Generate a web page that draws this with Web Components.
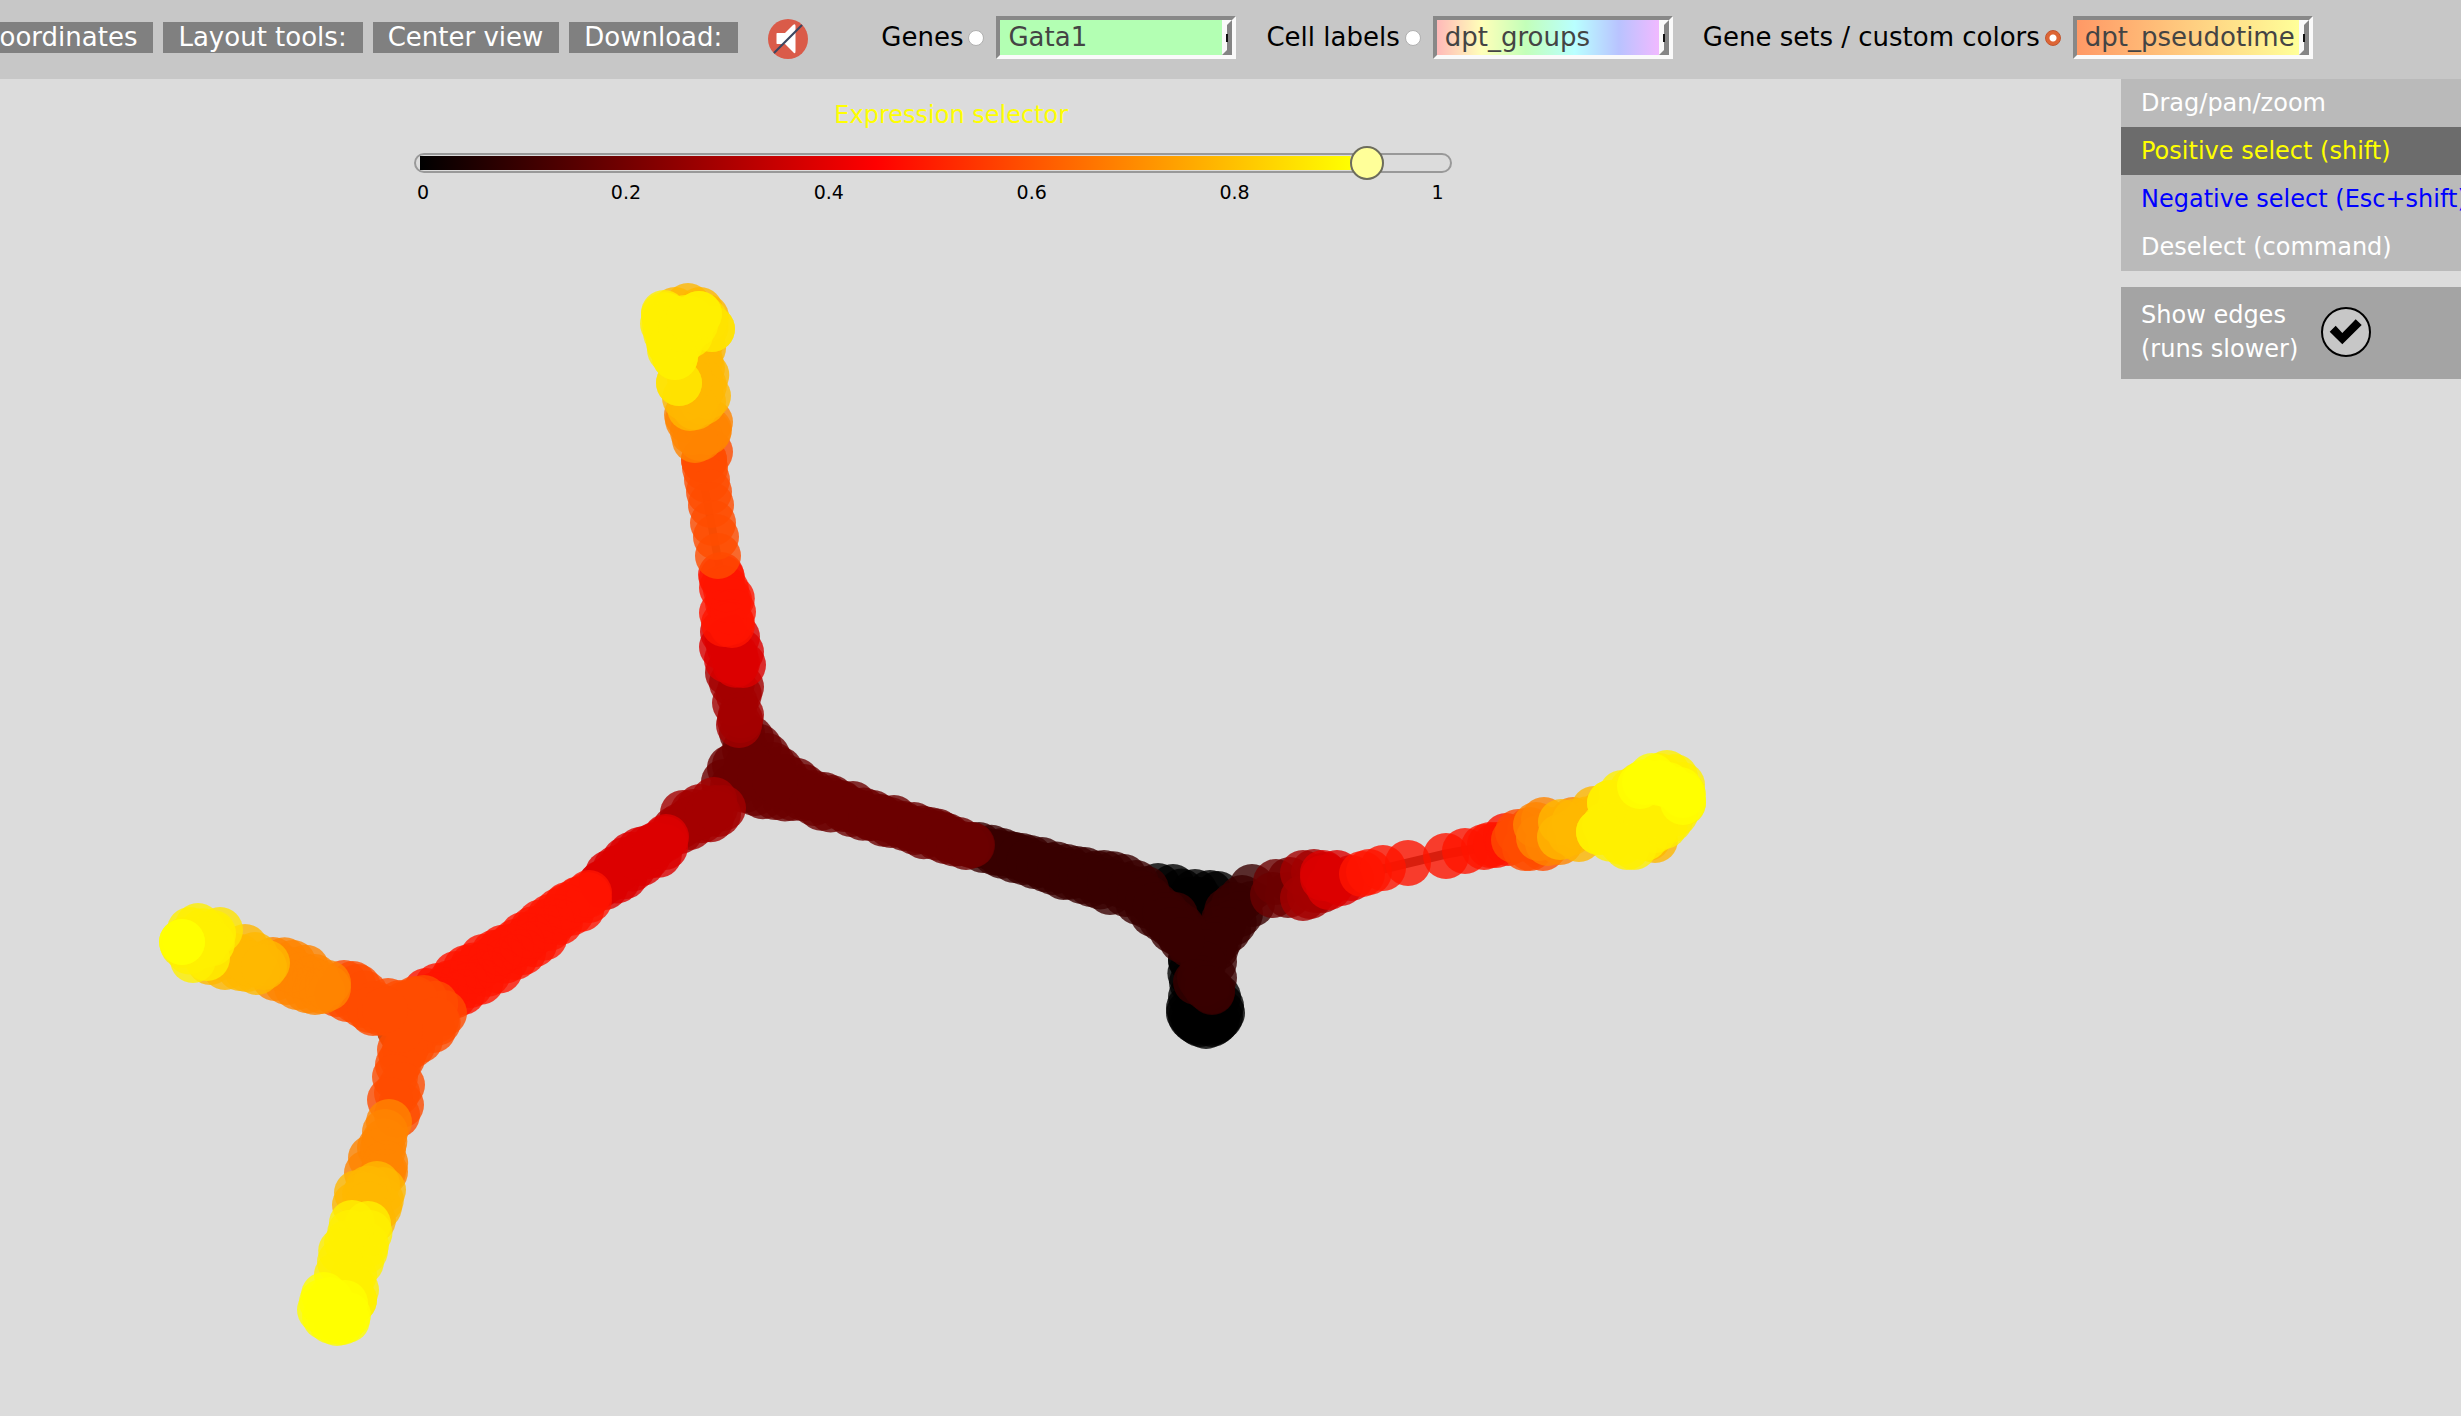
<!DOCTYPE html>
<html lang="en">
<head>
<meta charset="utf-8">
<title>Expression viewer</title>
<style>
html, body { margin: 0; height: 100%; }
body { background: #dcdcdc; font-family: "DejaVu Sans", sans-serif; overflow: hidden; }
</style>
</head>
<body>
<viewer-app></viewer-app>
<script>
const define = (name, html, setup) => customElements.define(name, class extends HTMLElement {
  constructor() {
    super();
    this.attachShadow({ mode: "open" }).innerHTML = html;
  }
  connectedCallback() { if (setup) setup(this, this.shadowRoot); }
});

define("tool-button", `
<style>
:host { display: block; flex: none; }
button { display: block; border: 0; margin: 0; padding: 0 16px 0 15px; background: #808080; color: #fff;
  font: inherit; font-size: 26px; line-height: 31px; white-space: nowrap; }
</style>
<button type="button"><slot></slot></button>`);

define("mute-button", `
<style>
:host { display: block; flex: none; }
button { display: block; border: 0; padding: 0; background: none; }
svg { display: block; width: 40px; height: 40px; }
</style>
<button type="button" aria-label="Mute">
<svg viewBox="0 0 40 40"><circle cx="20" cy="20" r="20" fill="#da5b49"/>
<path d="M9 14H17L25 6Q27.500 4 27.500 7V32Q27.500 36 25 33L17 25H9Q8.500 25 8.500 24V15Q8.500 14 9 14Z" fill="#fff"/>
<path d="M34 6L6 34" stroke="#3b4660" stroke-width="2.200"/></svg>
</button>`);

define("colour-choice", `
<style>
:host { display: flex; flex: none; align-items: center; font-size: 26px; line-height: 31px; color: #000; }
label { white-space: nowrap; }
input { appearance: none; box-sizing: border-box; width: 16px; height: 16px; margin: 0 12px 0 5px;
  border: 1px solid #b0b0b0; border-radius: 50%; background: #fff; }
input:checked { border: 1px solid #c2542c; background: radial-gradient(circle, #fff 3px, #dd6535 4px); }
.box { display: flex; box-sizing: border-box; width: 240px; height: 43px; border: 4px solid;
  border-color: #888 #fafafa #fafafa #888; }
select { appearance: none; flex: 1; min-width: 0; border: 0; border-radius: 0; margin: 0; padding: 0 0 0 8px;
  background: var(--fill); color: #444; font: inherit; outline: 0; }
.arrow { box-sizing: border-box; width: 10px; border: 5px solid; border-color: #fafafa #858585 #858585 #fafafa;
  background: #fafafa; position: relative; }
.arrow::before { content: ""; position: absolute; left: -1px; top: 9px; width: 2px; height: 8px; background: #111; }
</style>
<label for="pick"></label><input id="pick" type="radio">
<div class="box"><select><option></option></select><span class="arrow"></span></div>`,
(host, root) => {
  root.querySelector("label").textContent = host.getAttribute("label");
  root.querySelector("option").textContent = host.getAttribute("value");
  root.querySelector("select").setAttribute("aria-label", host.getAttribute("label"));
  root.querySelector("input").checked = host.hasAttribute("checked");
});

define("top-bar", `
<style>
:host { display: flex; align-items: center; box-sizing: border-box; padding: 16px 0 20px; background: #c7c7c7; }
nav { display: flex; flex: 0 0 30%; gap: 10px; justify-content: flex-end; overflow: hidden; }
mute-button { margin-left: 30px; align-self: flex-end; }
.choices { display: flex; gap: 30px; margin-left: 73px; }
.groups { --fill: linear-gradient(90deg, #ffb9b9, #ffffb9 20%, #c3ffb9 40%, #b9ffff 62%, #b9c3ff 82%, #f0b9ff); }
.genes { --fill: #b3ffb3; }
.custom { --fill: linear-gradient(90deg, #ff9966, #ffff99); }
</style>
<nav><tool-button>coordinates</tool-button><tool-button>Layout tools:</tool-button><tool-button>Center view</tool-button><tool-button>Download:</tool-button></nav>
<mute-button></mute-button>
<div class="choices">
<colour-choice class="genes" label="Genes" value="Gata1"></colour-choice>
<colour-choice class="groups" label="Cell labels" value="dpt_groups"></colour-choice>
<colour-choice class="custom" label="Gene sets / custom colors" value="dpt_pseudotime" checked></colour-choice>
</div>`);

define("expression-slider", `
<style>
:host { display: block; padding-top: 12px; }
label { display: block; padding-left: 42px; text-align: center; font-size: 24px; line-height: 48px; color: #ff0; }
input { appearance: none; display: block; box-sizing: border-box; width: calc(100% - 10px); height: 20px; margin: 14px 2px 0 8px;
  border: 2px solid #999; border-radius: 10px; outline: 0;
  background: linear-gradient(90deg, #000, #f00 49%, #ff0) 4px 1px / 90% 14px no-repeat; }
input::-webkit-slider-runnable-track { height: 16px; }
input::-webkit-slider-thumb { appearance: none; box-sizing: border-box; width: 34px; height: 34px; margin-top: -9px;
  border: 2px solid #6c6c5c; border-radius: 50%; background: #ffff99; }
.ticks { display: flex; justify-content: space-between; margin-top: 7px; font-size: 19px; line-height: 24px; color: #000; }
.ticks span { width: 34px; text-align: center; }
</style>
<label for="range">Expression selector</label>
<input id="range" type="range" min="0" max="1" step="any" value="0.934">
<div class="ticks"><span>0</span><span>0.2</span><span>0.4</span><span>0.6</span><span>0.8</span><span>1</span></div>`);

define("mode-panel", `
<style>
:host { display: block; font-size: 24px; color: #fff; overflow: hidden; }
button { display: block; width: 100%; border: 0; margin: 0; padding: 0 20px; background: #bababa; color: inherit;
  font: inherit; line-height: 48px; text-align: left; white-space: nowrap; }
.positive { background: #6c6c6c; color: #ff0; }
.negative { color: #00f; }
.edges { display: flex; align-items: center; gap: 23px; margin-top: 16px; padding: 11px 20px 13px; background: #a4a4a4; line-height: 34px; }
.tick { display: grid; }
.tick > * { grid-area: 1 / 1; width: 50px; height: 50px; margin: 0; }
input { appearance: none; box-sizing: border-box; border: 2px solid #000; border-radius: 50%; background: #c7c7c7; }
svg { pointer-events: none; }
</style>
<button type="button">Drag/pan/zoom</button>
<button type="button" class="positive">Positive select (shift)</button>
<button type="button" class="negative">Negative select (Esc+shift)</button>
<button type="button">Deselect (command)</button>
<div class="edges"><label for="edges">Show edges<br>(runs slower)</label>
<span class="tick"><input id="edges" type="checkbox" checked>
<svg viewBox="0 0 50 50"><path d="M8.700 24.700L14.700 18.700L21.300 26L34.700 12.300L40.700 18L21.300 37.300Z"/></svg></span></div>`);

// Each level: colour, then chains of cell positions. "*" marks separate cells, other chains are filled in between.
const levels = [
["#000000",
 "1158,886 1173,887 1195,892 1210,893 1218,894", "1190,900 1205,915 1205,935 1191,960", "1200,900 1210,930",
 "1191,960 1191,997 1189,1013 1194,1020 1206,1026 1217,1020 1222,1013 1218,997 1206,1000", "*1203,1010 1210,1015 1198,1015 1212,1005 1200,1024 1212,1024 1197,1022 1215,1022 1191,1017 1220,1017 1189,1008 1221,1006"],
["#380000",
 "979,845 1002,851 1022,856 1042,860 1067,867 1085,870 1104,873 1124,877 1136,883 1146,889",
 "983,850 1014,860 1034,866 1053,872 1091,884 1110,892 1126,894 1138,902 1153,914 1171,925 1185,938",
 "1000,853 1060,870 1110,882 1140,893 1165,912 1185,932 1200,950",
 "1252,887 1242,898 1234,905 1224,920 1216,938 1214,962 1214,978 1212,992", "1252,904 1240,914 1228,930 1214,945",
 "1175,915 1190,945 1204,952 1200,978 1212,991", "1165,915 1172,930 1182,940", "1196,982 1207,988"],
["#6c0000",
 "742,733 759,747 773,765 785,777 804,787 824,795 853,804 873,813 894,818 914,825 930,830 947,836 959,840 972,845",
 "730,768 724,782 745,790 755,793 775,797 793,798 814,803 851,814 871,818 891,825 915,832 945,841 966,847",
 "745,750 748,775 790,788 850,809 910,828 971,845", "735,765 760,775 775,780",
 "1276,882 1290,880 1288,895 1273,895"],
["#a40000",
 "728,673 732,683 741,687 735,703 741,715 740,720 739,725",
 "675,829 690,820 683,813 700,807 714,800 723,808 718,814 690,827 680,831", "690,820 715,808",
 "1303,873 1314,872 1325,875 1315,890 1303,898 1310,896 1322,890"],
["#dc0000",
 "723,632 737,637 722,647 741,652 743,665 727,660 735,655 737,663",
 "602,883 625,860 640,850 655,845 666,837", "605,887 642,863 665,847", "600,885 630,862 665,839",
 "1351,878 1341,883 1329,887 1323,878 1323,873 1337,873 1334,880"],
["#ff1400",
 "721,575 722,588 728,603 722,613 731,622 732,625 724,624", "722,578 733,612 729,600",
 "426,991 450,983 483,957 523,935 550,917 567,905 589,893", "445,1000 470,985 515,957 560,922 589,900", "435,995 480,966 530,936 588,895",
 "*1369,872 1362,874 1383,868 1408,863 1446,856 1465,851 1484,847 1490,845 1496,845 1506,836 1508,843"],
["#ff4c00",
 "*710,452 704,460", "704,460 705,468 707,480 709,492", "*711,505 713,523 716,537 718,556",
 "353,984 344,983 337,994 355,1000 373,1013 395,1010", "358,987 375,1004 400,1003 424,998 444,1013 433,1030 420,1040 400,1050",
 "370,1010 410,1015 425,1023 405,1050 398,1065 395,1077 397,1093 401,1105 397,1115",
 "*405,1004 415,999 436,1020 400,1030 385,1010 402,1085 390,1100",
 "*1518,832 1530,830 1535,842 1543,848 1530,848 1525,848 1514,840"],
["#ff8400",
 "687,415 688,420 693,432 708,432 710,422 709,430 700,438 695,440",
 "273,960 293,963 315,977 328,983", "275,978 297,987 315,992 322,991", "280,968 318,983 328,988",
 "383,1172 367,1173 371,1158 380,1148 385,1132 389,1122", "385,1172 383,1150",
 "*1573,820 1544,820 1553,830 1560,842 1548,843 1539,838 1536,825"],
["#ffb800",
 "675,310 688,306 700,310 706,317 702,340 702,368 708,396 703,402 690,408 685,398 700,380 695,407", "685,350 690,380",
 "245,947 255,955 267,963 257,972 240,968 225,967", "210,962 230,955 264,967",
 "373,1220 379,1207 383,1190 377,1184 357,1193 355,1205", "365,1195 370,1215",
 "1579,839 1570,833 1594,809 1605,810 1585,825 1561,822 1560,837", "1655,840 1648,838"],
["#ffe400", "*712,329 679,383 712,329 679,383", "*220,930 213,935", "*705,320"],
["#fff000",
 "*664,313 663,324 668,335 672,318 680,322 685,318 667,316 669,343", "670,345 690,335 699,314 690,322 675,357 670,350", "664,315 665,325 675,357", "675,335 699,314",
 "198,926 213,933 207,958 193,960 183,945 190,930", "*198,940 205,945",
 "354,1300 356,1290 354,1275 361,1262 366,1245 368,1224 352,1223 347,1243 340,1262 337,1275", "*354,1300 350,1285",
 "1610,803 1622,793 1640,785 1667,773 1675,777 1682,785 1683,803 1670,820 1655,830 1645,838 1634,847 1622,842 1599,832",
 "1610,803 1625,815 1650,810 1665,800", "1605,825 1635,830 1655,815", "*1599,832 1627,847"],
["#ffff00",
 "*182,942 182,942", "*1652,776 1645,782 1640,786 1668,785 1680,790 1683,795 1683,802 1660,783",
 "*324,1295 330,1300 345,1303 348,1315 347,1320 337,1323 325,1317 320,1310 322,1302 335,1310 331,1321 342,1322"]
];

define("cell-graph", `
<style>
:host { display: block; }
svg { display: block; width: 100%; height: auto; }
</style>
<svg viewBox="0 0 2461 1416" role="img" aria-label="Cells coloured by pseudotime">
<g stroke="#404848" fill="none"><path d="M1383 869L1408 863L1446 854L1484 847" stroke-width="9"/><path d="M705 490L720 570" stroke-width="8"/></g>
<path d="M373 984L395 987L392 1060L378 1037Z" fill="#404848"/><g class="cells" fill-opacity="0.800"></g></svg>`,
(host, root) => {
  let out = "";
  let seed = 7;
  const scatter = () => { seed = (seed * 16807) % 2147483647; return (seed / 2147483647 - 0.5) * 5; };
  for (const [colour, ...chains] of levels) {
    for (const chain of chains) {
      const single = chain.startsWith("*");
      const pts = chain.replace("*", "").split(" ").map(p => p.split(",").map(Number));
      pts.forEach(([x, y], i) => {
        if (i && !single) {
          const [px, py] = pts[i - 1];
          const n = Math.round(Math.hypot(x - px, y - py) / 11);
          for (let k = 1; k < n; k++) out += `<circle cx="${px + (x - px) * k / n + scatter()}" cy="${py + (y - py) * k / n + scatter()}" r="23" fill="${colour}"/>`;
        }
        out += `<circle cx="${x}" cy="${y}" r="23" fill="${colour}"/>`;
      });
    }
  }
  root.querySelector(".cells").innerHTML = out;
});

define("viewer-app", `
<style>
:host { display: block; position: relative; min-height: 100vh; overflow: hidden; }
cell-graph { position: absolute; inset: 0; z-index: 0; }
.front { position: relative; z-index: 1; }
main { display: flex; align-items: flex-start; justify-content: space-between; }
expression-slider { width: 42.600%; margin-left: 16.500%; }
mode-panel { flex: 0 0 340px; }
</style>
<cell-graph></cell-graph>
<div class="front"><top-bar></top-bar>
<main><expression-slider></expression-slider><mode-panel></mode-panel></main></div>`);
</script>
</body>
</html>
